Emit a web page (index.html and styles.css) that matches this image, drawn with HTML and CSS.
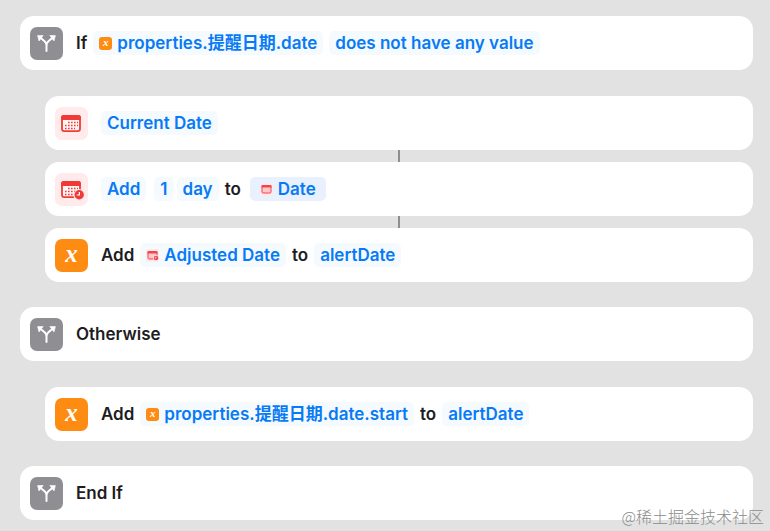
FILE: index.html
```
<!DOCTYPE html>
<html lang="en">
<head>
    <meta charset="UTF-8">
    <title>Shortcut actions</title>
    <link rel="stylesheet" href="styles.css">
</head>
<body>
    <!-- shared icons -->
    <svg class="defs" width="0" height="0" aria-hidden="true">
        <symbol id="branch" viewBox="0 0 33 33">
            <path d="M16.5 24V18.5Q16.5 15.8 14.6 14.2L10.4 10.8M16.5 18.5Q16.5 15.8 18.4 14.2L22.6 10.8" fill="none" stroke="#fff" stroke-width="2" stroke-linecap="round"/>
            <path d="M7.6 8.6L13.2 8.5L9 14ZM25.4 8.6L19.8 8.5L24 14Z" fill="#fff" stroke="#fff" stroke-width="0.6" stroke-linejoin="round"/>
        </symbol>
        <symbol id="calendar" viewBox="0 0 33 33">
            <rect x="7" y="8.8" width="18" height="15.4" rx="2.4" fill="#fff6f6" stroke="#f13a36" stroke-width="1.8"/>
            <path d="M6 13V10.5Q6 8 8.6 8H23.4Q26 8 26 10.5V13Z" fill="#f13a36"/>
            <path d="M13 15.5H23M10 18.5H23M10 21.5H20" fill="none" stroke="#f13a36" stroke-width="1.5" stroke-dasharray="1.6 1.4"/>
        </symbol>
        <symbol id="calendar-clock" viewBox="0 0 33 33">
            <use href="#calendar"/>
            <circle cx="24.2" cy="21.8" r="5.8" fill="#ffebeb"/>
            <circle cx="24.2" cy="21.8" r="4.7" fill="#f13a36"/>
            <path d="M24.4 18.9V22H21.8" fill="none" stroke="#fff" stroke-width="1.2"/>
        </symbol>
        <symbol id="calendar-small" viewBox="0 0 13 13">
            <rect x="2" y="2.5" width="9" height="7.5" rx="1" fill="#ffc9c9" stroke="#f0474a"/>
            <path d="M1.5 4.5V3Q1.5 2 2.5 2H10.5Q11.5 2 11.5 3V4.5Z" fill="#f0474a"/>
        </symbol>
        <symbol id="calendar-clock-small" viewBox="0 0 13 13">
            <use href="#calendar-small"/>
            <circle cx="10" cy="9" r="3" fill="#ffe9ec"/>
            <circle cx="10" cy="9" r="2.3" fill="#f0474a"/>
            <path d="M10 7.8V9H8.8" fill="none" stroke="#fff" stroke-width="0.7"/>
        </symbol>
    </svg>

    <main class="workflow">
        <div class="card">
            <svg class="icon gray" aria-hidden="true"><use href="#branch"/></svg>
            <span class="label">If</span>
            <button class="chip" type="button"><span class="mini orange">x</span><span>properties.<b>提醒日期</b>.date</span></button>
            <button class="chip" type="button">does not have any value</button>
        </div>

        <div class="nested">
            <div class="card">
                <svg class="icon pink" aria-hidden="true"><use href="#calendar"/></svg>
                <button class="chip" type="button">Current Date</button>
            </div>
            <div class="connector"></div>
            <div class="card">
                <svg class="icon pink" aria-hidden="true"><use href="#calendar-clock"/></svg>
                <button class="chip" type="button">Add</button>
                <span class="amount">
                    <button class="chip" type="button">1</button>
                    <button class="chip" type="button">day</button>
                </span>
                <span class="label">to</span>
                <button class="chip selected" type="button"><svg class="mini rose" aria-hidden="true"><use href="#calendar-small"/></svg>Date</button>
            </div>
            <div class="connector"></div>
            <div class="card">
                <span class="icon orange">x</span>
                <span class="label">Add</span>
                <button class="chip" type="button"><svg class="mini rose" aria-hidden="true"><use href="#calendar-clock-small"/></svg>Adjusted Date</button>
                <span class="label">to</span>
                <button class="chip" type="button">alertDate</button>
            </div>
        </div>

        <div class="card">
            <svg class="icon gray" aria-hidden="true"><use href="#branch"/></svg>
            <span class="label">Otherwise</span>
        </div>

        <div class="nested">
            <div class="card">
                <span class="icon orange">x</span>
                <span class="label">Add</span>
                <button class="chip" type="button"><span class="mini orange">x</span><span>properties.<b>提醒日期</b>.date.start</span></button>
                <span class="label">to</span>
                <button class="chip" type="button">alertDate</button>
            </div>
        </div>

        <div class="card">
            <svg class="icon gray" aria-hidden="true"><use href="#branch"/></svg>
            <span class="label">End If</span>
        </div>
    </main>

    <div class="watermark">@稀土掘金技术社区</div>
</body>
</html>
```
FILE: styles.css
```
* {
    box-sizing: border-box;
}
body {
    margin: 0;
    background-color: #e2e2e2;
    font-family: Inter, "Noto Sans CJK SC", sans-serif;
    font-size: 17px;
    font-weight: 600;
    line-height: 22px;
    color: #1d1d1f;
}
.defs {
    position: absolute;
}
.workflow {
    padding: 16px 17px 11px 20px;
}
.nested {
    margin: 26px 0 25px 25px;
}
.card {
    display: flex;
    align-items: center;
    min-height: 54px;
    padding: 10px;
    gap: 6px;
    background-color: #fff;
    border-radius: 14px;
}
.connector {
    width: 2px;
    height: 12px;
    margin: 0 auto;
    background-color: #8e8e90;
}
.icon {
    flex: none;
    width: 33px;
    height: 33px;
    margin-right: 7px;
    border-radius: 7px;
    font: italic bold 25px/29px "Liberation Serif", serif;
    text-align: center;
    color: #fff;
}
.gray {
    background-color: #8e8e93;
}
.orange {
    background-color: #ff8c12;
}
.pink {
    background-color: #ffebeb;
}
.rose {
    background-color: #ffe9ec;
}
.chip {
    display: flex;
    align-items: center;
    padding: 1px 6px;
    border: 0;
    border-radius: 5px;
    background-color: #f5faff;
    color: #087af5;
    font: inherit;
    white-space: nowrap;
}
.chip b {
    font-weight: 700;
}
.chip.selected {
    margin-left: 3px;
    padding: 1px 10px;
    background-color: #eaf1fe;
}
.amount {
    display: flex;
    gap: 3px;
    margin-left: 2px;
}
.mini {
    flex: none;
    width: 13px;
    height: 13px;
    margin-right: 5px;
    border-radius: 3px;
    font: italic bold 11px/11px "Liberation Serif", serif;
    text-align: center;
    color: #fff;
}
.watermark {
    position: absolute;
    right: 6px;
    bottom: 4px;
    font-family: "Noto Sans CJK SC", sans-serif;
    font-size: 16px;
    font-weight: 300;
    color: #8c8c8c;
}
```
